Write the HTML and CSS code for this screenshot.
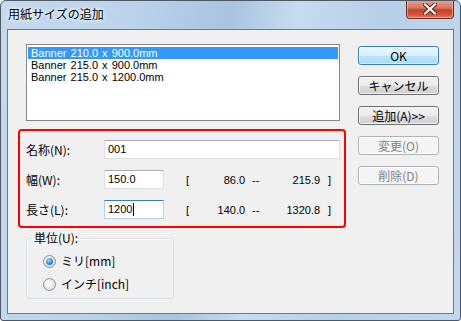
FILE: index.html
```html
<!DOCTYPE html>
<html lang="ja">
<head>
<meta charset="utf-8">
<title>用紙サイズの追加</title>
<link rel="stylesheet" href="styles.css">
</head>
<body>
<div class="window">
  <div class="titlebar">
    <div class="title">用紙サイズの追加</div>
    <div class="close">
      <svg width="14" height="12" viewBox="0 0 14 12"><path d="M2 1.5 L12 10.5 M12 1.5 L2 10.5" stroke="#5a1c12" stroke-width="4" stroke-linecap="square" fill="none"/><path d="M2 1.5 L12 10.5 M12 1.5 L2 10.5" stroke="#ffffff" stroke-width="2.2" stroke-linecap="square" fill="none"/></svg>
    </div>
  </div>
  <div class="client">
    <div class="left">
      <div class="listbox">
        <div class="item selected">Banner 210.0 x 900.0mm</div>
        <div class="item">Banner 215.0 x 900.0mm</div>
        <div class="item">Banner 215.0 x 1200.0mm</div>
      </div>
      <div class="redbox">
        <div class="row">
          <span class="label">名称(N):</span>
          <span class="input wide">001</span>
        </div>
        <div class="row">
          <span class="label">幅(W):</span>
          <span class="input">150.0</span>
          <span class="range"><span class="br">[</span><span class="min">86.0</span><span class="dash">--</span><span class="max">215.9</span><span class="br2">]</span></span>
        </div>
        <div class="row">
          <span class="label">長さ(L):</span>
          <span class="input focus">1200<span class="caret"></span></span>
          <span class="range"><span class="br">[</span><span class="min">140.0</span><span class="dash">--</span><span class="max">1320.8</span><span class="br2">]</span></span>
        </div>
      </div>
      <fieldset class="group">
        <legend>単位(U):</legend>
        <div class="radio-row"><span class="radio on"></span><span class="rlabel">ミリ[mm]</span></div>
        <div class="radio-row"><span class="radio"></span><span class="rlabel">インチ[inch]</span></div>
      </fieldset>
    </div>
    <div class="buttons">
      <div class="btn default">OK</div>
      <div class="btn">キャンセル</div>
      <div class="btn">追加(A)&gt;&gt;</div>
      <div class="btn disabled">変更(O)</div>
      <div class="btn disabled">削除(D)</div>
    </div>
  </div>
</div>
</body>
</html>
```
FILE: styles.css
```css
html, body {
  margin: 0;
  padding: 0;
  background: #ffffff;
}
body {
  font-family: "Noto Sans CJK JP", "Liberation Sans", sans-serif;
  font-size: 12px;
  color: #000;
}
.window {
  width: 461px;
  height: 321px;
  box-sizing: border-box;
  border: 1px solid #4e5862;
  border-radius: 6px 6px 3px 3px;
  background: linear-gradient(100deg, #c4d9ee 0%, #bcd3eb 25%, #a9c4e0 45%, #c6dbef 58%, #b7cfe8 75%, #c3d8ee 100%);
  display: flex;
  flex-direction: column;
  overflow: hidden;
}
.titlebar {
  height: 28px;
  display: flex;
  justify-content: space-between;
  align-items: flex-start;
}
.title {
  padding: 5px 0 0 7px;
  line-height: 16px;
  font-size: 12px;
  color: #000;
  text-shadow: 0 0 6px #ffffff, 0 0 3px #ffffff;
}
.close {
  width: 46px;
  height: 18px;
  margin: -1px 6px 0 0;
  border: 1px solid #6b2d23;
  border-top: none;
  border-radius: 0 0 4px 4px;
  background: linear-gradient(#e9a593 0%, #d8735c 45%, #c4402a 55%, #d45a3c 85%, #e38a6a 100%);
  box-shadow: inset 0 0 0 1px rgba(255, 210, 200, 0.5);
  display: flex;
  align-items: center;
  justify-content: center;
}
.close svg {
  display: block;
}
.client {
  flex: 1;
  margin: 0 6px 6px 6px;
  border: 1px solid #6d7884;
  background: #f0f0f0;
  display: flex;
  padding: 14px 0 0 10px;
}
.left {
  width: 328px;
  display: flex;
  flex-direction: column;
}
.listbox {
  margin-left: 8px;
  width: 314px;
  height: 77px;
  box-sizing: border-box;
  border: 1px solid #828790;
  background: #ffffff;
  padding: 2px 1px;
  font-family: "Liberation Sans", sans-serif;
  font-size: 11px;
  line-height: 12px;
}
.item {
  padding-left: 3px;
  height: 12px;
  white-space: pre;
  word-spacing: 1px;
}
.item.selected {
  background: #3399ff;
  color: #ffffff;
}
.redbox {
  margin-top: 8px;
  height: 99px;
  box-sizing: border-box;
  border: 2px solid #ff0000;
  border-radius: 4px;
  padding: 9px 0 7px 6px;
  display: flex;
  flex-direction: column;
  gap: 11px;
}
.row {
  display: flex;
  align-items: center;
  height: 19px;
}
.label {
  width: 78px;
  line-height: 16px;
}
.input {
  width: 60px;
  height: 19px;
  box-sizing: border-box;
  border: 1px solid #dbdfe6;
  border-top-color: #abadb3;
  background: #ffffff;
  font-family: "Liberation Sans", sans-serif;
  font-size: 11px;
  line-height: 17px;
  padding-left: 3px;
  display: flex;
  align-items: center;
}
.input.wide {
  width: 236px;
}
.input.focus {
  border-color: #b5cfe7;
  border-top-color: #3d7bad;
}
.caret {
  width: 1px;
  height: 13px;
  background: #000;
  margin-left: 1px;
}
.range {
  display: flex;
  font-family: "Liberation Sans", sans-serif;
  font-size: 11px;
  margin-left: 22px;
}
.min {
  width: 56px;
  text-align: right;
}
.dash {
  margin-left: 7px;
  width: 14px;
}
.max {
  width: 54px;
  text-align: right;
}
.br2 {
  margin-left: 8px;
}
.group {
  margin: 3px 0 0 8px;
  width: 148px;
  height: 68px;
  box-sizing: border-box;
  border: 1px solid #d5dfe5;
  border-radius: 3px;
  box-shadow: inset 1px 1px 0 #ffffff;
  padding: 8px 0 0 16px;
}
.group legend {
  padding: 0 2px;
  margin-left: -11px;
  line-height: 14px;
}
.radio-row {
  display: flex;
  align-items: center;
  height: 16px;
  margin-bottom: 7px;
}
.radio {
  width: 11px;
  height: 11px;
  border-radius: 50%;
  border: 1px solid #8e8f8f;
  background: radial-gradient(circle at 40% 40%, #ffffff 0%, #e4e4e4 60%, #cfcfcf 100%);
  box-sizing: content-box;
  display: flex;
  align-items: center;
  justify-content: center;
}
.radio.on::after {
  content: "";
  width: 7px;
  height: 7px;
  border-radius: 50%;
  background: radial-gradient(circle at 40% 35%, #9fe0ff 0%, #2d8ad6 55%, #1a5d9e 100%);
}
.rlabel {
  margin-left: 5px;
  line-height: 16px;
}
.buttons {
  margin: 2px 0 0 12px;
  display: flex;
  flex-direction: column;
  gap: 11px;
}
.btn {
  width: 81px;
  height: 19px;
  box-sizing: border-box;
  border: 1px solid #707070;
  border-radius: 3px;
  background: linear-gradient(#f2f2f2 0%, #ebebeb 50%, #dddddd 51%, #cfcfcf 100%);
  box-shadow: inset 0 0 0 1px rgba(255, 255, 255, 0.7);
  display: flex;
  align-items: center;
  justify-content: center;
  line-height: 16px;
}
.btn.default {
  border-color: #3c7fb1;
  background: linear-gradient(#eaf6fd 0%, #d9f0fc 50%, #bee6fd 51%, #a7d9f5 100%);
  box-shadow: inset 0 0 0 1px rgba(255, 255, 255, 0.6);
}
.btn.disabled {
  border-color: #adb2b5;
  background: #f4f4f4;
  color: #838383;
}
```
